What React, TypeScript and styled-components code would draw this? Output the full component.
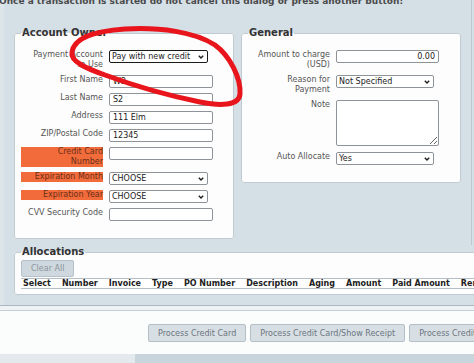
import React from "react";
import styled, { createGlobalStyle } from "styled-components";

const GlobalStyle = createGlobalStyle`
  html, body {
    margin: 0;
    padding: 0;
  }
  body {
    background: #d5dfe6;
    font-family: "DejaVu Sans", Verdana, sans-serif;
    overflow: hidden;
  }
`;

const Page = styled.div`
  position: relative;
  width: 474px;
  height: 363px;
  overflow: hidden;
  background: #d5dfe6;
`;

const Main = styled.div`
  border-left: 4px solid #dee5ea;
  padding-bottom: 10px;
`;

const TopArea = styled.div`
  box-sizing: border-box;
  width: 468px;
  border-right: 1px solid #bcc7cf;
  padding-bottom: 6px;
`;

const Notice = styled.div`
  margin: -4px 0 0 -5px;
  font-size: 9px;
  line-height: 11px;
  font-weight: bold;
  color: #4a4a4a;
  white-space: nowrap;
`;

const Upper = styled.div`
  display: flex;
  align-items: flex-start;
  gap: 7px;
  padding: 20px 0 0 10px;
`;

const Group = styled.fieldset<{ $width: number }>`
  box-sizing: border-box;
  width: ${(p) => p.$width}px;
  min-width: 0;
  margin: 0;
  padding: 11px 6px 17px;
  background: #fdfdfd;
  border: 1px solid #c0cad2;
  border-radius: 3px;
  display: flex;
  flex-direction: column;
  gap: 5px;
`;

const Legend = styled.legend`
  padding: 0 1px;
  font-size: 10px;
  line-height: 12px;
  font-weight: bold;
  color: #333;
`;

const Row = styled.div`
  display: grid;
  grid-template-columns: 82px auto;
  column-gap: 6px;
  align-items: start;
`;

const Label = styled.div<{ $warn?: boolean }>`
  text-align: right;
  font-size: 8px;
  line-height: 10px;
  color: ${(p) => (p.$warn ? "#6a3019" : "#555")};
  background: ${(p) => (p.$warn ? "#f26b3a" : "transparent")};
`;

const TextInput = styled.input<{ $width?: number; $right?: boolean }>`
  display: block;
  box-sizing: border-box;
  width: ${(p) => p.$width ?? 104}px;
  height: 13px;
  margin: 0;
  padding: 0 3px;
  border: 1px solid #8d9399;
  border-radius: 2px;
  background: #fff;
  font-family: inherit;
  font-size: 8px;
  color: #222;
  text-align: ${(p) => (p.$right ? "right" : "left")};
  outline: none;
`;

const SelectWrap = styled.div<{ $width: number }>`
  position: relative;
  width: ${(p) => p.$width}px;
  height: 13px;
`;

const Select = styled.select<{ $active?: boolean }>`
  display: block;
  appearance: none;
  box-sizing: border-box;
  width: 100%;
  height: 13px;
  margin: 0;
  padding: 0 0 0 2px;
  border: 1px solid ${(p) => (p.$active ? "#1b1b1b" : "#8d9399")};
  border-radius: 2px;
  background: #fff;
  font-family: inherit;
  font-size: 8px;
  line-height: 11px;
  color: #222;
  outline: none;
`;

const Chevron = styled.svg`
  position: absolute;
  right: 4px;
  top: 5px;
  pointer-events: none;
`;

const Note = styled.textarea`
  box-sizing: border-box;
  width: 103px;
  height: 46px;
  margin: 0 0 1px;
  padding: 2px;
  border: 1px solid #8d9399;
  border-radius: 2px;
  background: #fff;
  font-family: inherit;
  font-size: 8px;
  display: block;
  outline: none;
`;

const Allocations = styled.fieldset`
  box-sizing: border-box;
  width: 640px;
  min-width: 0;
  margin: 1px 0 0 10px;
  padding: 2px 6px 5px;
  background: #fdfdfd;
  border: 1px solid #c0cad2;
  border-radius: 3px;
`;

const ClearButton = styled.button`
  display: block;
  box-sizing: border-box;
  height: 17px;
  margin: 0 0 1px;
  padding: 0 9px;
  background: #cfd8de;
  border: 1px solid #b6c1c9;
  border-radius: 2px;
  font-family: inherit;
  font-size: 8px;
  color: #8a949c;
`;

const HeaderRow = styled.div`
  display: flex;
  box-sizing: border-box;
  height: 11px;
  background: #fff;
  border-top: 1px solid #b3bec6;
  border-bottom: 1px solid #b3bec6;
  white-space: nowrap;
`;

const HeaderCell = styled.span`
  padding: 0 9px 0 2px;
  font-size: 8px;
  line-height: 9px;
  font-weight: bold;
  color: #222;
`;

const Footer = styled.div`
  border-top: 1px solid #abb7c0;
`;

const FooterStrip = styled.div`
  height: 4px;
  background: #eef2f5;
  border-bottom: 1px solid #c6cfd6;
`;

const ButtonBar = styled.div`
  display: flex;
  gap: 4px;
  padding: 13px 0 12px 148px;
  background: #fbfcfc;
  white-space: nowrap;
`;

const ActionButton = styled.button`
  flex: none;
  box-sizing: border-box;
  height: 18px;
  padding: 0 9px;
  background: #d7dfe5;
  border: 1px solid #b4bfc7;
  border-radius: 2px;
  font-family: inherit;
  font-size: 8px;
  color: #6b757e;
`;

const BottomStrip = styled.div`
  display: flex;
  height: 9px;
`;

const StripPart = styled.div<{ $tone: string; $width?: number }>`
  background: ${(p) => p.$tone};
  ${(p) => (p.$width ? `width: ${p.$width}px;` : "flex: 1;")}
`;

const Annotation = styled.svg`
  position: absolute;
  left: 0;
  top: 0;
  pointer-events: none;
`;

const Arrow = () => (
  <Chevron width="6" height="4" viewBox="0 0 6 4">
    <path d="M0.8 0.8 L3 3 L5.2 0.8" fill="none" stroke="#1e1e1e" strokeWidth="1.4" />
  </Chevron>
);

const Dropdown: React.FC<{ value: string; width: number; active?: boolean }> = ({
  value,
  width,
  active,
}) => (
  <SelectWrap $width={width}>
    <Select $active={active} defaultValue={value}>
      <option>{value}</option>
    </Select>
    <Arrow />
  </SelectWrap>
);

const columns = [
  "Select",
  "Number",
  "Invoice",
  "Type",
  "PO Number",
  "Description",
  "Aging",
  "Amount",
  "Paid Amount",
  "Remaining Amount",
];

export default function App() {
  return (
    <Page>
      <GlobalStyle />
      <Main>
        <TopArea>
          <Notice>
            Once a transaction is started do not cancel this dialog or press another button!
          </Notice>
          <Upper>
            <Group $width={220}>
              <Legend>Account Owner</Legend>
              <Row>
                <Label>
                  Payment Account
                  <br />
                  to Use
                </Label>
                <Dropdown value="Pay with new credit" width={99} active />
              </Row>
              <Row>
                <Label>First Name</Label>
                <TextInput defaultValue="W2" />
              </Row>
              <Row>
                <Label>Last Name</Label>
                <TextInput defaultValue="S2" />
              </Row>
              <Row>
                <Label>Address</Label>
                <TextInput defaultValue="111 Elm" />
              </Row>
              <Row>
                <Label>ZIP/Postal Code</Label>
                <TextInput defaultValue="12345" />
              </Row>
              <Row>
                <Label $warn>
                  Credit Card
                  <br />
                  Number
                </Label>
                <TextInput defaultValue="" />
              </Row>
              <Row>
                <Label $warn>Expiration Month</Label>
                <Dropdown value="CHOOSE" width={99} />
              </Row>
              <Row>
                <Label $warn>Expiration Year</Label>
                <Dropdown value="CHOOSE" width={99} />
              </Row>
              <Row>
                <Label>CVV Security Code</Label>
                <TextInput defaultValue="" />
              </Row>
            </Group>

            <Group $width={220}>
              <Legend>General</Legend>
              <Row>
                <Label>
                  Amount to charge
                  <br />
                  (USD)
                </Label>
                <TextInput defaultValue="0.00" $width={103} $right />
              </Row>
              <Row>
                <Label>
                  Reason for
                  <br />
                  Payment
                </Label>
                <Dropdown value="Not Specified" width={98} />
              </Row>
              <Row>
                <Label>Note</Label>
                <Note />
              </Row>
              <Row>
                <Label>Auto Allocate</Label>
                <Dropdown value="Yes" width={98} />
              </Row>
            </Group>
          </Upper>
        </TopArea>

        <Allocations>
          <Legend>Allocations</Legend>
          <ClearButton>Clear All</ClearButton>
          <HeaderRow>
            {columns.map((c) => (
              <HeaderCell key={c}>{c}</HeaderCell>
            ))}
          </HeaderRow>
        </Allocations>
      </Main>

      <Footer>
        <FooterStrip />
        <ButtonBar>
          <ActionButton>Process Credit Card</ActionButton>
          <ActionButton>Process Credit Card/Show Receipt</ActionButton>
          <ActionButton>Process Credit Card/Email Receipt</ActionButton>
        </ButtonBar>
      </Footer>
      <BottomStrip>
        <StripPart $tone="#e4e9ed" $width={135} />
        <StripPart $tone="#c9d5dd" />
      </BottomStrip>

      <Annotation width="474" height="363" viewBox="0 0 474 363">
        <path
          d="M72 52 C74 38 95 31 125 29 C160 27 195 32 215 45 C230 56 241 78 240 94 C239 106 220 106 200 102 C170 96 135 86 105 75 C88 69 70 62 72 52 Z"
          fill="none"
          stroke="#e8161c"
          strokeWidth="5"
          strokeLinecap="round"
          strokeLinejoin="round"
        />
      </Annotation>
    </Page>
  );
}
